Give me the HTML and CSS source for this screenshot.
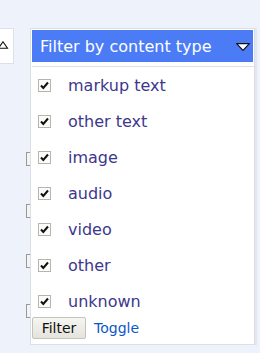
FILE: index.html
```html
<!DOCTYPE html>
<html lang="en">
<head>
  <meta charset="UTF-8">
  <title>Filter by content type</title>
  <link rel="stylesheet" href="styles.css">
</head>
<body>
  <div class="page">
    <div class="side">
      <div class="sortbox">
        <svg class="up" width="11" height="8" viewBox="0 0 11 8"><path d="M0.5 7.2 L5 0.8 L9.5 7.2 Z" fill="#fff" stroke="#111" stroke-width="1.1"/></svg>
      </div>
      <div class="stub"></div>
      <div class="stub"></div>
      <div class="stub"></div>
      <div class="stub"></div>
    </div>

    <form class="dropdown">
      <div class="headwrap">
        <div class="head">
          <span>Filter by content type</span>
          <svg class="arrow" width="14" height="8" viewBox="0 0 14 8"><path d="M0.6 0.6 L13.4 0.6 L7 7.4 Z" fill="#fff" stroke="#111" stroke-width="1.2"/></svg>
        </div>
      </div>
      <ul class="types">
        <li><span class="box"><svg width="11" height="11" viewBox="0 0 11 11"><path d="M2 5.5 L4.3 8 L9 2.5" fill="none" stroke="#111" stroke-width="2"/></svg></span>markup text</li>
        <li><span class="box"><svg width="11" height="11" viewBox="0 0 11 11"><path d="M2 5.5 L4.3 8 L9 2.5" fill="none" stroke="#111" stroke-width="2"/></svg></span>other text</li>
        <li><span class="box"><svg width="11" height="11" viewBox="0 0 11 11"><path d="M2 5.5 L4.3 8 L9 2.5" fill="none" stroke="#111" stroke-width="2"/></svg></span>image</li>
        <li><span class="box"><svg width="11" height="11" viewBox="0 0 11 11"><path d="M2 5.5 L4.3 8 L9 2.5" fill="none" stroke="#111" stroke-width="2"/></svg></span>audio</li>
        <li><span class="box"><svg width="11" height="11" viewBox="0 0 11 11"><path d="M2 5.5 L4.3 8 L9 2.5" fill="none" stroke="#111" stroke-width="2"/></svg></span>video</li>
        <li><span class="box"><svg width="11" height="11" viewBox="0 0 11 11"><path d="M2 5.5 L4.3 8 L9 2.5" fill="none" stroke="#111" stroke-width="2"/></svg></span>other</li>
        <li><span class="box"><svg width="11" height="11" viewBox="0 0 11 11"><path d="M2 5.5 L4.3 8 L9 2.5" fill="none" stroke="#111" stroke-width="2"/></svg></span>unknown</li>
      </ul>
      <div class="actions">
        <button type="button" class="btn">Filter</button>
        <a href="#" class="toggle">Toggle</a>
      </div>
    </form>
  </div>
</body>
</html>
```

FILE: styles.css
```css
body{
  margin: 0;
  background-color: #eef2fb;
  font-family: "DejaVu Sans", sans-serif;
  height: 353px;
  overflow: hidden;
}
.page{
  position: relative;
  height: 353px;
}
.side{
  padding-top: 28px;
}
.sortbox{
  width: 13px;
  height: 34px;
  background-color: #fff;
  border: 1px solid #dde0e8;
  border-left: none;
  position: relative;
}
.up{
  position: absolute;
  left: -2px;
  top: 12px;
}
.stub{
  margin-left: 26px;
  width: 8px;
  height: 12px;
  border: 1px solid #999;
  background-color: #f4f4f4;
  margin-top: 36px;
}
.stub:nth-child(2){ margin-top: 88px; }
.stub:nth-child(3){ margin-top: 38px; }
.stub:nth-child(4){ margin-top: 36px; }

.dropdown{
  position: absolute;
  left: 30px;
  top: 28px;
  width: 222px;
  background-color: #fff;
  border: 1px solid #dcdfe6;
  box-shadow: 2px 0 0 #e2e6ee;
  margin: 0;
  padding: 1px 0 5px 1px;
}
.headwrap{
  padding-bottom: 4px;
  border-bottom: 1px solid #e0e0e0;
}
.head{
  display: flex;
  justify-content: space-between;
  align-items: center;
  height: 32px;
  margin-right: 1px;
  padding: 0 3px 0 8px;
  background-color: #4b7cf6;
  color: #fff;
  font-size: 16px;
}
.arrow{
  margin-top: 2px;
}
.types{
  list-style: none;
  margin: 0;
  padding: 0;
}
.types li{
  height: 36px;
  display: flex;
  align-items: center;
  color: #3c388b;
  font-size: 16px;
}
.box{
  width: 11px;
  height: 11px;
  margin: 0 17px 0 6px;
  border: 1px solid #b5b5ad;
  background-color: #fbfbf9;
  display: flex;
}
.actions{
  display: flex;
  align-items: center;
  margin-top: -2px;
}
.btn{
  height: 22px;
  width: 54px;
  padding: 0;
  font-family: "DejaVu Sans", sans-serif;
  font-size: 14px;
  color: #111;
  background: linear-gradient(#f6f6f2, #e4e3dc);
  border: 1px solid #c4c3bb;
  border-radius: 2px;
}
.toggle{
  margin-left: 8px;
  color: #0b57c9;
  font-size: 14px;
  text-decoration: none;
}
```
